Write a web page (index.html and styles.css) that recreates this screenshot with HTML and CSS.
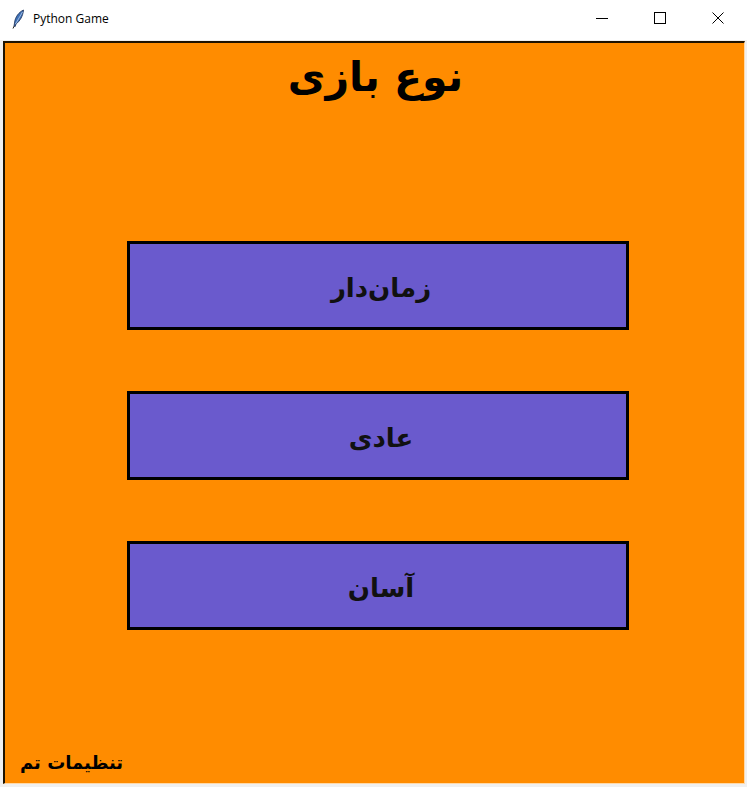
FILE: index.html
```html
<!DOCTYPE html>
<html lang="fa">
<head>
<meta charset="utf-8">
<title>Python Game</title>
<link rel="stylesheet" href="styles.css">
</head>
<body>
<div class="window">
  <div class="titlebar">
    <div class="title-left">
      <svg class="feather" width="14" height="20" viewBox="0 0 14 20">
        <path d="M12.5 1 C8 3 4 8 3.5 14 L3 17 L4.2 17.5 L5 15 C9 12 12 7 12.5 1 Z" fill="#3d6fb5" stroke="#1b2f55" stroke-width="0.8"/>
        <path d="M11.5 3 L4.5 15" stroke="#c9dbf2" stroke-width="0.7"/>
        <path d="M3.2 17 L2 19.5" stroke="#222" stroke-width="1"/>
      </svg>
      <span class="title-text">Python Game</span>
    </div>
    <div class="controls">
      <span class="ctl"><svg width="12" height="12" viewBox="0 0 12 12"><path d="M0 6.5 H12" stroke="#000" stroke-width="1"/></svg></span>
      <span class="ctl"><svg width="12" height="12" viewBox="0 0 12 12"><rect x="0.5" y="0.5" width="11" height="11" fill="none" stroke="#000" stroke-width="1"/></svg></span>
      <span class="ctl"><svg width="12" height="12" viewBox="0 0 12 12"><path d="M0.5 0.5 L11.5 11.5 M11.5 0.5 L0.5 11.5" stroke="#000" stroke-width="1"/></svg></span>
    </div>
  </div>
  <div class="client">
    <div class="canvas">
      <h1 class="heading">نوع بازی</h1>
      <div class="buttons">
        <div class="btn">زمان‌دار</div>
        <div class="btn">عادی</div>
        <div class="btn">آسان</div>
      </div>
      <div class="footer">تنظیمات تم</div>
    </div>
  </div>
</div>
</body>
</html>
```
FILE: styles.css
```css
html, body {
  margin: 0;
  padding: 0;
  background: #f0f0f0;
}
.window {
  width: 747px;
  height: 787px;
  display: flex;
  flex-direction: column;
  overflow: hidden;
}
.titlebar {
  height: 40px;
  flex: none;
  background: #ffffff;
  display: flex;
  align-items: center;
  justify-content: space-between;
  border-bottom: 1px solid #f0f0f0;
}
.title-left {
  display: flex;
  align-items: center;
  padding-left: 11px;
  gap: 8px;
}
.feather {
  display: block;
  margin-top: -2px;
}
.title-text {
  font-family: "Open Sans", "Liberation Sans", sans-serif;
  font-size: 12px;
  color: #000;
  margin-top: -3px;
}
.controls {
  display: flex;
  height: 100%;
  margin-top: -4px;
}
.ctl {
  width: 58px;
  display: flex;
  align-items: center;
  justify-content: center;
}
.ctl svg { display: block; }
.client {
  flex: 1;
  padding: 0 2px 3px 3px;
  background: #f0f0f0;
  display: flex;
}
.canvas {
  flex: 1;
  background: #ff8c00;
  border-top: 2px solid #1f1300;
  border-left: 2px solid #1f1300;
  border-right: 1px solid #ffd9a8;
  border-bottom: 1px solid #ffd9a8;
  display: flex;
  flex-direction: column;
}
.heading {
  margin: 0;
  height: 198px;
  text-align: center;
  font-family: "DejaVu Sans", sans-serif;
  font-weight: bold;
  font-size: 41px;
  line-height: 1;
  padding-top: 14px;
  box-sizing: border-box;
  color: #000;
  direction: rtl;
  padding-left: 2px;
}
.buttons {
  display: flex;
  flex-direction: column;
  gap: 61px;
  padding-left: 122px;
}
.btn {
  width: 490px;
  height: 79px;
  background: #6a5acd;
  border: 3px solid #000;
  display: flex;
  align-items: center;
  justify-content: center;
  font-family: "DejaVu Sans", sans-serif;
  font-weight: bold;
  font-size: 26px;
  color: #111;
  direction: rtl;
  padding-left: 6px;
  padding-top: 4px;
  box-sizing: content-box;
}
.footer {
  margin-top: auto;
  margin-bottom: 10px;
  padding-left: 15px;
  font-family: "DejaVu Sans", sans-serif;
  font-weight: bold;
  font-size: 18px;
  color: #000;
  direction: rtl;
  align-self: flex-start;
}
```
